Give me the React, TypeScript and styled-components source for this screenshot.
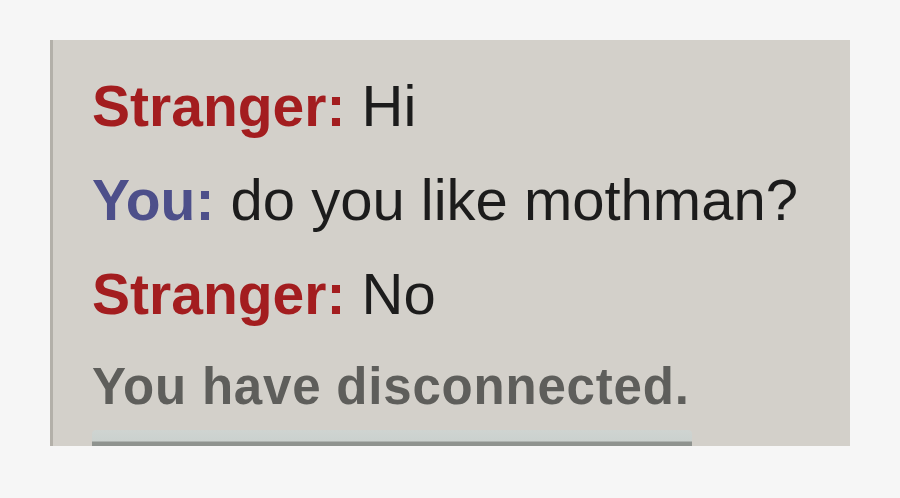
import React from "react";
import styled, { createGlobalStyle } from "styled-components";

const Global = createGlobalStyle`
  html, body { margin: 0; padding: 0; background: #f6f6f6; }
  body { font-family: "Liberation Sans", Arial, sans-serif; }
`;

const Page = styled.div`
  width: 900px;
  height: 498px;
  padding: 40px 0 0 50px;
  box-sizing: border-box;
  overflow: hidden;
`;

const Panel = styled.div`
  width: 800px;
  height: 406px;
  box-sizing: border-box;
  background: #d3d0ca;
  border-left: 3px solid #b3b0a9;
  padding: 19px 0 0 39px;
  overflow: hidden;
  display: flex;
  flex-direction: column;
`;

const Line = styled.div`
  font-size: 58px;
  line-height: 94px;
  height: 94px;
  color: #1c1c1c;
  white-space: nowrap;
`;

const Name = styled.span<{ $who: "stranger" | "you" }>`
  font-size: 57px;
  font-weight: bold;
  color: ${(p) => (p.$who === "stranger" ? "#a31d1f" : "#4d4f8a")};
`;

const Status = styled.div`
  font-size: 51px;
  line-height: 92px;
  height: 92px;
  font-weight: bold;
  letter-spacing: 0.8px;
  color: #5e5e5b;
  white-space: nowrap;
`;

const Button = styled.div`
  width: 600px;
  height: 30px;
  flex-shrink: 0;
  margin-top: -3px;
  border-radius: 4px 4px 0 0;
  background: linear-gradient(to bottom, #cfd4d1 0px, #cbd1ce 11px, #8f938f 12px, #8f938f 16px);
`;

export default function App() {
  return (
    <>
      <Global />
      <Page>
        <Panel>
          <Line>
            <Name $who="stranger">Stranger:</Name> Hi
          </Line>
          <Line>
            <Name $who="you">You:</Name> do you like mothman?
          </Line>
          <Line>
            <Name $who="stranger">Stranger:</Name> No
          </Line>
          <Status>You have disconnected.</Status>
          <Button />
        </Panel>
      </Page>
    </>
  );
}
